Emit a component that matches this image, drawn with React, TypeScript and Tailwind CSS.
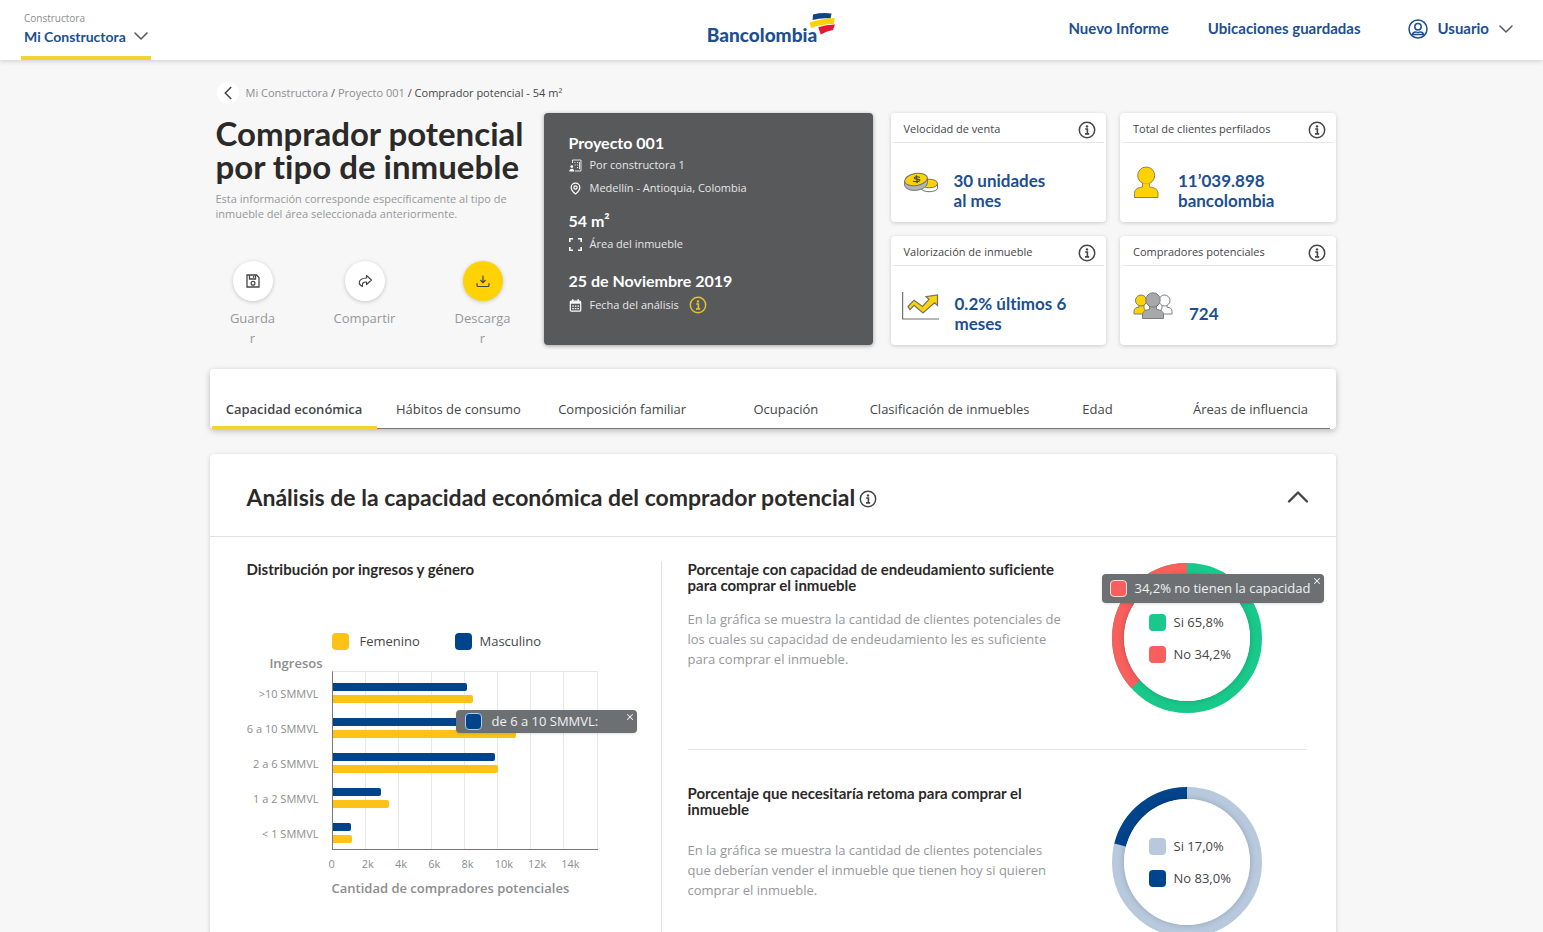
import type { ReactNode } from "react";
import { ChevronDown, ChevronLeft, ChevronUp, MapPin, X } from "lucide-react";

const tabs = [
  { name: "Capacidad económica", width: "w-[165px] shrink-0" },
  { name: "Hábitos de consumo", width: "flex-1" },
  { name: "Composición familiar", width: "flex-1" },
  { name: "Ocupación", width: "flex-1" },
  { name: "Clasificación de inmuebles", width: "flex-1" },
  { name: "Edad", width: "w-[132px]" },
  { name: "Áreas de influencia", width: "w-[166px] pl-2" },
];

// thousands of buyers
const incomes = [
  { label: ">10 SMMVL", male: 8.1, female: 8.5 },
  { label: "6 a 10 SMMVL", male: 9, female: 11.1 },
  { label: "2 a 6 SMMVL", male: 9.8, female: 10 },
  { label: "1 a 2 SMMVL", male: 2.9, female: 3.4 },
  { label: "< 1 SMMVL", male: 1.1, female: 1.2 },
];
const ticks = ["0", "2k", "4k", "6k", "8k", "10k", "12k", "14k"];
const maxIncome = 16;

export default function App() {
  return (
    <div className="min-h-screen bg-[#f7f7f7] font-['Open_Sans',sans-serif] text-[#454648] [font-variant-ligatures:none]">
      <Header />
      <main className="mx-auto w-full max-w-[1128px] pl-0.5 pb-10">
        <Breadcrumb />
        <div className="mt-[9px] flex items-start">
          <Intro />
          <ProjectCard />
          <div className="ml-[18px] grid flex-1 grid-cols-2 gap-[14px]">
            <Stat title="Velocidad de venta" icon={<CoinsIcon />} gap="gap-4">
              30 unidades
              <br />
              al mes
            </Stat>
            <Stat title="Total de clientes perfilados" icon={<PersonIcon />} gap="gap-[18px]">
              11’039.898
              <br />
              bancolombia
            </Stat>
            <Stat title="Valorización de inmueble" icon={<TrendIcon />} gap="gap-4">
              0.2% últimos 6 meses
            </Stat>
            <Stat title="Compradores potenciales" icon={<PeopleIcon />} gap="gap-4">
              724
            </Stat>
          </div>
        </div>
        <Tabs />
        <Analysis />
      </main>
    </div>
  );
}

const Header = () => {
  return (
    <header className="grid h-[60px] grid-cols-[1fr_auto_1fr] bg-white px-[21px] font-['Lato',sans-serif] text-[15px] font-bold text-[#1d4f91] shadow-[0_1px_5px_rgba(0,0,0,0.18)]">
      <div className="relative flex w-[130px] flex-col border-b-4 border-[#f2d32f] pl-[3px] pt-3">
        <label htmlFor="builder" className="font-['Open_Sans',sans-serif] text-[10px] leading-[13px] font-normal text-[#8c8d8f]">
          Constructora
        </label>
        <select id="builder" className="h-[22px] w-full appearance-none bg-transparent text-[14px]">
          <option>Mi Constructora</option>
        </select>
        <ChevronDown className="pointer-events-none absolute -right-0.5 bottom-2 size-6 text-[#58595b]" strokeWidth={1.6} />
      </div>
      <Logo />
      <nav className="flex items-center justify-end pr-1 pb-[3px]">
        <a href="#informe">Nuevo Informe</a>
        <a href="#ubicaciones" className="ml-[39px]">
          Ubicaciones guardadas
        </a>
        <button className="ml-12 flex items-center font-bold">
          <UserIcon />
          <span className="ml-[9px]">Usuario</span>
          <ChevronDown className="ml-[5px] size-6 text-[#58595b]" strokeWidth={1.5} />
        </button>
      </nav>
    </header>
  );
};

const Breadcrumb = () => {
  return (
    <nav className="mt-[22px] flex items-center pl-[7px] text-[11px] text-[#8c8d8f]">
      <button aria-label="Volver" className="flex size-[22px] items-center justify-center rounded-full bg-white text-[#454648]">
        <ChevronLeft className="size-[22px]" strokeWidth={1.8} />
      </button>
      <p className="ml-[7px]">
        <a href="#constructora">Mi Constructora</a> <span className="text-[#58595b]">/</span> <a href="#proyecto">Proyecto 001</a>{" "}
        <span className="text-[#454648]">/ Comprador potencial - 54 m²</span>
      </p>
    </nav>
  );
};

const Intro = () => {
  return (
    <section className="w-[334px] pl-[6px]">
      <h1 className="mt-1 font-['Lato',sans-serif] text-[33px] leading-[33px] font-bold text-[#2c2a29]">
        Comprador potencial
        <br />
        por tipo de inmueble
      </h1>
      <p className="mt-2 w-[310px] text-[11px] leading-[15px] text-[#96979a]">
        Esta información corresponde específicamente al tipo de inmueble del área seleccionada anteriormente.
      </p>
      <div className="mt-10 flex gap-[58px] pl-[14px] text-[13px] leading-5 text-[#96979a]">
        <Action label="Guardar" width="w-[46px]" color="bg-white">
          <SaveIcon />
        </Action>
        <Action label="Compartir" width="w-[62px]" color="bg-white">
          <ShareIcon />
        </Action>
        <Action label="Descargar" width="w-[58px]" color="bg-[#ffd204]">
          <DownloadIcon />
        </Action>
      </div>
    </section>
  );
};

const Action = ({ label, width, color, children }: { label: string; width: string; color: string; children: ReactNode }) => {
  return (
    <button className={`flex flex-col items-center ${width}`}>
      <span className={`flex size-10 items-center justify-center rounded-full text-[#454648] shadow-[0_1px_4px_rgba(0,0,0,0.2)] ${color}`}>
        {children}
      </span>
      <span className="mt-[7px] w-full break-all">{label}</span>
    </button>
  );
};

const ProjectCard = () => {
  return (
    <section className="h-[232px] w-[329px] rounded bg-[#58595b] pt-[19px] pl-[25px] text-[11px] text-[#e6e7e8] shadow-[0_1px_4px_rgba(0,0,0,0.35)]">
      <ProjectHeading>Proyecto 001</ProjectHeading>
      <p className="flex h-[22px] items-center gap-2">
        <BuildingIcon />
        Por constructora 1
      </p>
      <p className="mt-px flex h-[22px] items-center gap-2">
        <MapPin className="size-[13px] text-white" strokeWidth={2.2} />
        Medellín - Antioquia, Colombia
      </p>
      <div className="mt-[11px]">
        <ProjectHeading>54 m²</ProjectHeading>
        <p className="mt-px flex h-[22px] items-center gap-2">
          <AreaIcon />
          Área del inmueble
        </p>
      </div>
      <div className="mt-[15px]">
        <ProjectHeading>25 de Noviembre 2019</ProjectHeading>
        <p className="mt-0.5 flex h-[22px] items-center gap-2">
          <CalendarIcon />
          Fecha del análisis
          <span className="ml-0.5 text-[#e3c02c]">
            <InfoIcon />
          </span>
        </p>
      </div>
    </section>
  );
};

const ProjectHeading = ({ children }: { children: ReactNode }) => (
  <h2 className="font-['Lato',sans-serif] text-[16px] leading-[22px] font-bold text-white">{children}</h2>
);

const Stat = ({ title, icon, gap, children }: { title: string; icon: ReactNode; gap: string; children: ReactNode }) => {
  return (
    <section className="flex h-[109px] flex-col rounded bg-white shadow-[0_1px_4px_rgba(0,0,0,0.18)]">
      <div className="mx-0.5 flex h-[30px] items-center justify-between border-b border-[#e6e7e8] pt-1 pr-2 pl-[11px]">
        <h3 className="text-[11px]">{title}</h3>
        <InfoIcon />
      </div>
      <div className={`flex flex-1 items-center pl-[13px] ${gap}`}>
        <span className="shrink-0">{icon}</span>
        <p className="mt-4 w-[130px] font-['Lato',sans-serif] text-[17px] leading-5 font-bold text-[#1d4f91]">{children}</p>
      </div>
    </section>
  );
};

const Tabs = () => {
  return (
    <nav className="mt-[21px] flex h-[60px] rounded bg-white pr-[6px] pl-0.5 text-[13px] shadow-[0_2px_6px_rgba(0,0,0,0.25)]">
      {tabs.map((tab, i) => (
        <button
          key={tab.name}
          className={`text-center whitespace-nowrap ${tab.width} ${
            i === 0 ? "border-b-3 border-[#f2d32f] pt-6 font-semibold" : "border-b border-[#77787b] pt-[22px]"
          }`}
        >
          {tab.name}
        </button>
      ))}
    </nav>
  );
};

const Analysis = () => {
  return (
    <section className="mt-[25px] rounded bg-white shadow-[0_1px_4px_rgba(0,0,0,0.18)]">
      <div className="flex h-[83px] items-center border-b border-[#e0e1e2] pt-1 pr-[20px] pl-[37px]">
        <h2 className="font-['Lato',sans-serif] text-[23px] font-bold text-[#2c2a29]">Análisis de la capacidad económica del comprador potencial</h2>
        <span className="ml-1 pt-1">
          <InfoIcon />
        </span>
        <button aria-label="Contraer" className="ml-auto">
          <ChevronUp className="size-9" strokeWidth={1.6} />
        </button>
      </div>
      <div className="flex pt-6 pr-[29px] pl-[37px]">
        <IncomeChart />
        <div className="flex-1 pl-[26px]">
          <Share
            title="Porcentaje con capacidad de endeudamiento suficiente para comprar el inmueble"
            text="En la gráfica se muestra la cantidad de clientes potenciales de los cuales su capacidad de endeudamiento les es suficiente para comprar el inmueble."
            textClass="mt-4"
            yes={{ label: "Si 65,8%", color: "#19c98c", swatch: "bg-[#19c98c]" }}
            no={{ label: "No 34,2%", color: "#f95f5d", swatch: "bg-[#f95f5d]" }}
            noPart={0.366}
          >
            <div className="absolute top-[11px] -left-[10px] flex h-[29px] w-[222px] items-center rounded bg-[#6d7073] pl-2 text-[13px] whitespace-nowrap text-white/90 shadow">
              <span className="mr-2 size-[17px] rounded border border-[#ffd9d8] bg-[#f95f5d]" />
              34,2% no tienen la capacidad
              <CloseButton />
            </div>
          </Share>
          <div className="mt-9 mb-[35px] border-t border-[#e0e4e5]" />
          <Share
            title="Porcentaje que necesitaría retoma para comprar el inmueble"
            text="En la gráfica se muestra la cantidad de clientes potenciales que deberían vender el inmueble que tienen hoy si quieren comprar el inmueble."
            textClass="mt-[23px]"
            yes={{ label: "Si 17,0%", color: "#b8c9de", swatch: "bg-[#b8c9de]" }}
            no={{ label: "No 83,0%", color: "#00448c", swatch: "bg-[#00448c]" }}
            noPart={0.21}
          />
        </div>
      </div>
    </section>
  );
};

const IncomeChart = () => {
  return (
    <section className="w-[415px] border-r border-[#e0e4e5]">
      <h3 className="font-['Lato',sans-serif] text-[15px] leading-4 font-bold text-[#2c2a29]">Distribución por ingresos y género</h3>
      <div className="mt-[54px] flex items-center pl-[85px] text-[13px] leading-5">
        <span className="size-[17px] rounded bg-[#fdc218]" />
        <span className="ml-[11px] w-[95px]">Femenino</span>
        <span className="size-[17px] rounded bg-[#00448c]" />
        <span className="ml-2">Masculino</span>
      </div>
      <div className="flex text-[11px] text-[#8c8d8f]">
        <div className="w-[85px] text-right">
          <p className="mt-[2px] pr-[9px] pb-[3px] text-[13px] leading-5 font-semibold">Ingresos</p>
          {incomes.map((income) => (
            <p key={income.label} className="h-[35px] pr-[13px] leading-[35px] whitespace-nowrap">
              {income.label}
            </p>
          ))}
        </div>
        <div className="mt-5 w-[266px]">
          <div className="relative h-[179px] border-t border-b border-l border-t-[#e0e8e8] border-b-[#77787b] border-l-[#77787b] pt-[3px]">
            <div className="absolute inset-0 flex">
              {ticks.map((tick) => (
                <span key={tick} className="flex-1 border-r border-[#e2eaea]" />
              ))}
            </div>
            {incomes.map((income) => (
              <div key={income.label} className="relative flex h-[35px] flex-col justify-center gap-1">
                <span className="h-2 rounded-r-xs bg-[#00448c]" style={{ width: `${(income.male / maxIncome) * 100}%` }} />
                <span className="h-2 rounded-r-xs bg-[#fdc218]" style={{ width: `${(income.female / maxIncome) * 100}%` }} />
              </div>
            ))}
            <div className="absolute top-[38px] left-[123px] flex h-[23px] w-[181px] items-center rounded bg-[#6d7073] pl-[9px] text-[13px] whitespace-nowrap text-white/90 shadow">
              <span className="mr-[10px] size-[17px] rounded border border-[#a8cdf5] bg-[#00448c]" />
              de 6 a 10 SMMVL:
              <CloseButton />
            </div>
          </div>
          <div className="-ml-[3px] mt-[5px] flex w-[266px] leading-[18px]">
            {ticks.map((tick) => (
              <span key={tick} className="flex-1">
                {tick}
              </span>
            ))}
          </div>
          <p className="mt-[5px] text-[13px] leading-5 font-semibold whitespace-nowrap">Cantidad de compradores potenciales</p>
        </div>
      </div>
    </section>
  );
};

const CloseButton = () => (
  <button aria-label="Cerrar" className="absolute top-0.5 right-0.5">
    <X className="size-[10px]" strokeWidth={2.5} />
  </button>
);

type Slice = { label: string; color: string; swatch: string };

type ShareProps = {
  title: string;
  text: string;
  textClass: string;
  yes: Slice;
  no: Slice;
  noPart: number;
  children?: ReactNode;
};

const Share = ({ title, text, textClass, yes, no, noPart, children }: ShareProps) => {
  const length = 2 * Math.PI * 69;
  return (
    <article className="flex justify-between pr-[45px]">
      <div className="w-[380px]">
        <h3 className="font-['Lato',sans-serif] text-[15px] leading-4 font-bold text-[#2c2a29]">{title}</h3>
        <p className={`text-[13px] leading-5 text-[#96979a] ${textClass}`}>{text}</p>
      </div>
      <div className="relative mt-0.5 flex size-[150px] items-center justify-center">
        <svg viewBox="0 0 150 150" className="absolute inset-0 size-[150px]" fill="none" strokeWidth="12">
          <circle cx="75" cy="75" r="69" stroke={yes.color} />
          {/* runs counter-clockwise from the top */}
          <circle
            cx="75"
            cy="75"
            r="69"
            stroke={no.color}
            strokeDasharray={`${length * noPart} ${length}`}
            transform="matrix(0 -1 -1 0 150 150)"
          />
        </svg>
        <ul className="relative flex size-[126px] flex-col justify-center gap-3 rounded-full bg-white pl-[25px] text-[13px] leading-5 shadow-[0_0_6px_rgba(0,0,0,0.2)]">
          {[yes, no].map((slice) => (
            <li key={slice.label} className="flex items-center gap-2">
              <span className={`size-[17px] rounded ${slice.swatch}`} />
              {slice.label}
            </li>
          ))}
        </ul>
        {children}
      </div>
    </article>
  );
};

const Logo = () => (
  <div className="flex text-[#1d4f91]">
    <span className="pt-[23px] text-[19px] leading-6 font-black">Bancolombia</span>
    <svg viewBox="0 0 27 24" className="-ml-2 mt-3 h-6 w-[27px]">
      <path d="M4 2.500Q13 .3 22.500 1.500L21.500 6.500Q12 5.600 3.600 8Z" fill="#12447f" />
      <path d="M.6 10.500Q12 6.500 25.800 6L24.800 12Q12 12 2 16Z" fill="#ffd204" />
      <path d="M9.200 15.200Q17 12.600 26 12.500L24 18Q17 19.200 11.800 22.600Z" fill="#e31837" />
    </svg>
  </div>
);

const InfoIcon = () => (
  <svg viewBox="0 0 18 18" className="size-[18px]" fill="none" stroke="currentColor">
    <circle cx="9" cy="9" r="7.700" strokeWidth="1.500" />
    <circle cx="9" cy="5.400" r="1.200" fill="currentColor" stroke="none" />
    <path d="M7.200 8h2.200v4.700M7 12.900h4.200" strokeWidth="1.600" />
  </svg>
);

const UserIcon = () => (
  <svg viewBox="0 0 20 20" className="size-5" fill="none" stroke="currentColor" strokeWidth="1.500">
    <circle cx="10" cy="10" r="9" />
    <circle cx="10" cy="7.700" r="3.200" />
    <path d="M4.500 15.600c.4-2 1.500-2.700 3-2.700.9 0 1.300.5 2.500.5s1.600-.5 2.500-.5c1.500 0 2.600.7 3 2.700Z" />
  </svg>
);

const SaveIcon = () => (
  <svg viewBox="0 0 16 16" className="size-4" fill="none" stroke="currentColor" strokeWidth="1.300">
    <path d="M2 2h9.500L14 4.500V14H2ZM4.500 2v4h6V2M8.500 3v1.800" />
    <circle cx="8" cy="10.300" r="1.900" />
  </svg>
);

const ShareIcon = () => (
  <svg viewBox="0 0 16 16" className="size-4" fill="none" stroke="currentColor" strokeWidth="1.200" strokeLinejoin="round">
    <path d="M9.500 2.500 14.500 7l-5 4.500V9C6.500 8.800 5 9.800 5.400 13.500 1 11.500.5 5.500 9.500 5Z" />
  </svg>
);

const DownloadIcon = () => (
  <svg viewBox="0 0 16 16" className="size-4" fill="none" stroke="currentColor" strokeWidth="1.200" strokeLinecap="round">
    <path d="M8 3v6.500M5.800 7.500 8 9.700l2.200-2.200M2 10.500v1.700q0 1.300 1.300 1.300h9.400q1.300 0 1.300-1.300v-1.700" />
  </svg>
);

const BuildingIcon = () => (
  <svg viewBox="0 0 13 13" className="size-[13px]" fill="none" stroke="#e6e7e8">
    <path d="M3.500 4V1h8.500v11H6M5.500 3.500h1M8 3.500h1M5.800 6h1M8 6h1M8 8.500h1M10.500 3v7" />
    <circle cx="2.800" cy="7.600" r="1.400" fill="#fff" stroke="none" />
    <path d="M.3 12.500c0-3.800 5-3.800 5 0Z" fill="#fff" stroke="none" />
  </svg>
);

const AreaIcon = () => (
  <svg viewBox="0 0 13 13" className="size-[13px]" fill="none" stroke="#fff" strokeWidth="1.600">
    <path d="M.8 4V.8H4M9 .8h3.200V4M12.200 9v3.200H9M4 12.200H.8V9" />
  </svg>
);

const CalendarIcon = () => (
  <svg viewBox="0 0 13 13" className="size-[13px]" fill="none" stroke="#fff">
    <rect x="1.300" y="2.200" width="10.400" height="10" rx="1" strokeWidth="1.200" />
    <path d="M1 3.600h11" strokeWidth="2.200" />
    <path d="M3.800.3v3M9.200.3v3" strokeWidth="1.500" />
    <path d="M3.200 7.200h6.800M3.200 9.600h6.800" strokeWidth="1.300" strokeDasharray="1.600 1" />
  </svg>
);

const CoinsIcon = () => (
  <svg viewBox="0 0 34 22" className="h-[22px] w-[34px]" fill="#ffd204" stroke="#6f7173" strokeWidth="1">
    <path d="M17 12v4.500c1 2 4 3.200 8 3.200 5 0 8.500-1.700 8.500-3.700v-4.500" fill="#fff" />
    <ellipse cx="25.500" cy="11.500" rx="8" ry="4.300" />
    <path d="M.6 9v4.500c1 3.500 6 5.500 12 4.800 6-.7 10.900-4 10.900-8V6" fill="#b2b3b5" />
    <ellipse cx="12" cy="7.500" rx="11.500" ry="6" transform="rotate(-10 12 7.500)" />
    <path d="M15.800 5.400c-2-1.200-6-.6-5.400.9.700 1.500 5 .1 5.400 1.700.4 1.600-4.800 2.200-6.800.9M12.300 3.400l1 7.600" fill="none" stroke="#454648" strokeWidth="1.200" />
  </svg>
);

const PersonIcon = () => (
  <svg viewBox="0 0 27 33" className="h-[33px] w-[27px]" fill="#ffd204" stroke="#8a8267" strokeWidth="1">
    <path d="M1.500 31.500v-4c0-4.500 3.500-6 8-6.500v-4h7v4c4.500.5 8.500 2 8.500 6.500v4Z" />
    <circle cx="13.200" cy="9.500" r="8.500" />
    <path d="M10 17.400h6.400v3.200H10Z" stroke="none" />
  </svg>
);

const TrendIcon = () => (
  <svg viewBox="0 0 37 28" className="-ml-0.5 h-7 w-[37px]" fill="none" stroke="#6f7173" strokeWidth="1.200">
    <path d="M.6 0v27H37" />
    <path d="m6 14.500 6-6.300 8.500 6.200 6.500-7-3-2.700L35.500 3v10.500l-3-2.600-11.500 10-9-7.500-4 4.300Z" fill="#ffd204" />
  </svg>
);

const PeopleIcon = () => (
  <svg viewBox="0 0 40 28" className="h-7 w-10" stroke="#7b7c7e" strokeWidth="1">
    <path d="M26 22h13v-2.500c0-3-2-4-5-4.300V12h-5v4Z" fill="#fff" />
    <circle cx="31.500" cy="8.500" r="5.500" fill="#fff" />
    <path d="M1 22v-2.500c0-3 2-4 5-4.300V12h5v4l3 6Z" fill="#ffd204" />
    <circle cx="8" cy="8.500" r="5.500" fill="#ffd204" />
    <path d="M9.500 26.500V23c0-4 3-5 7-5.500V14h7v3.500c4 .5 7 1.500 7 5.500v3.500Z" fill="#a7a8aa" />
    <circle cx="20" cy="8" r="7.200" fill="#a7a8aa" />
  </svg>
);
